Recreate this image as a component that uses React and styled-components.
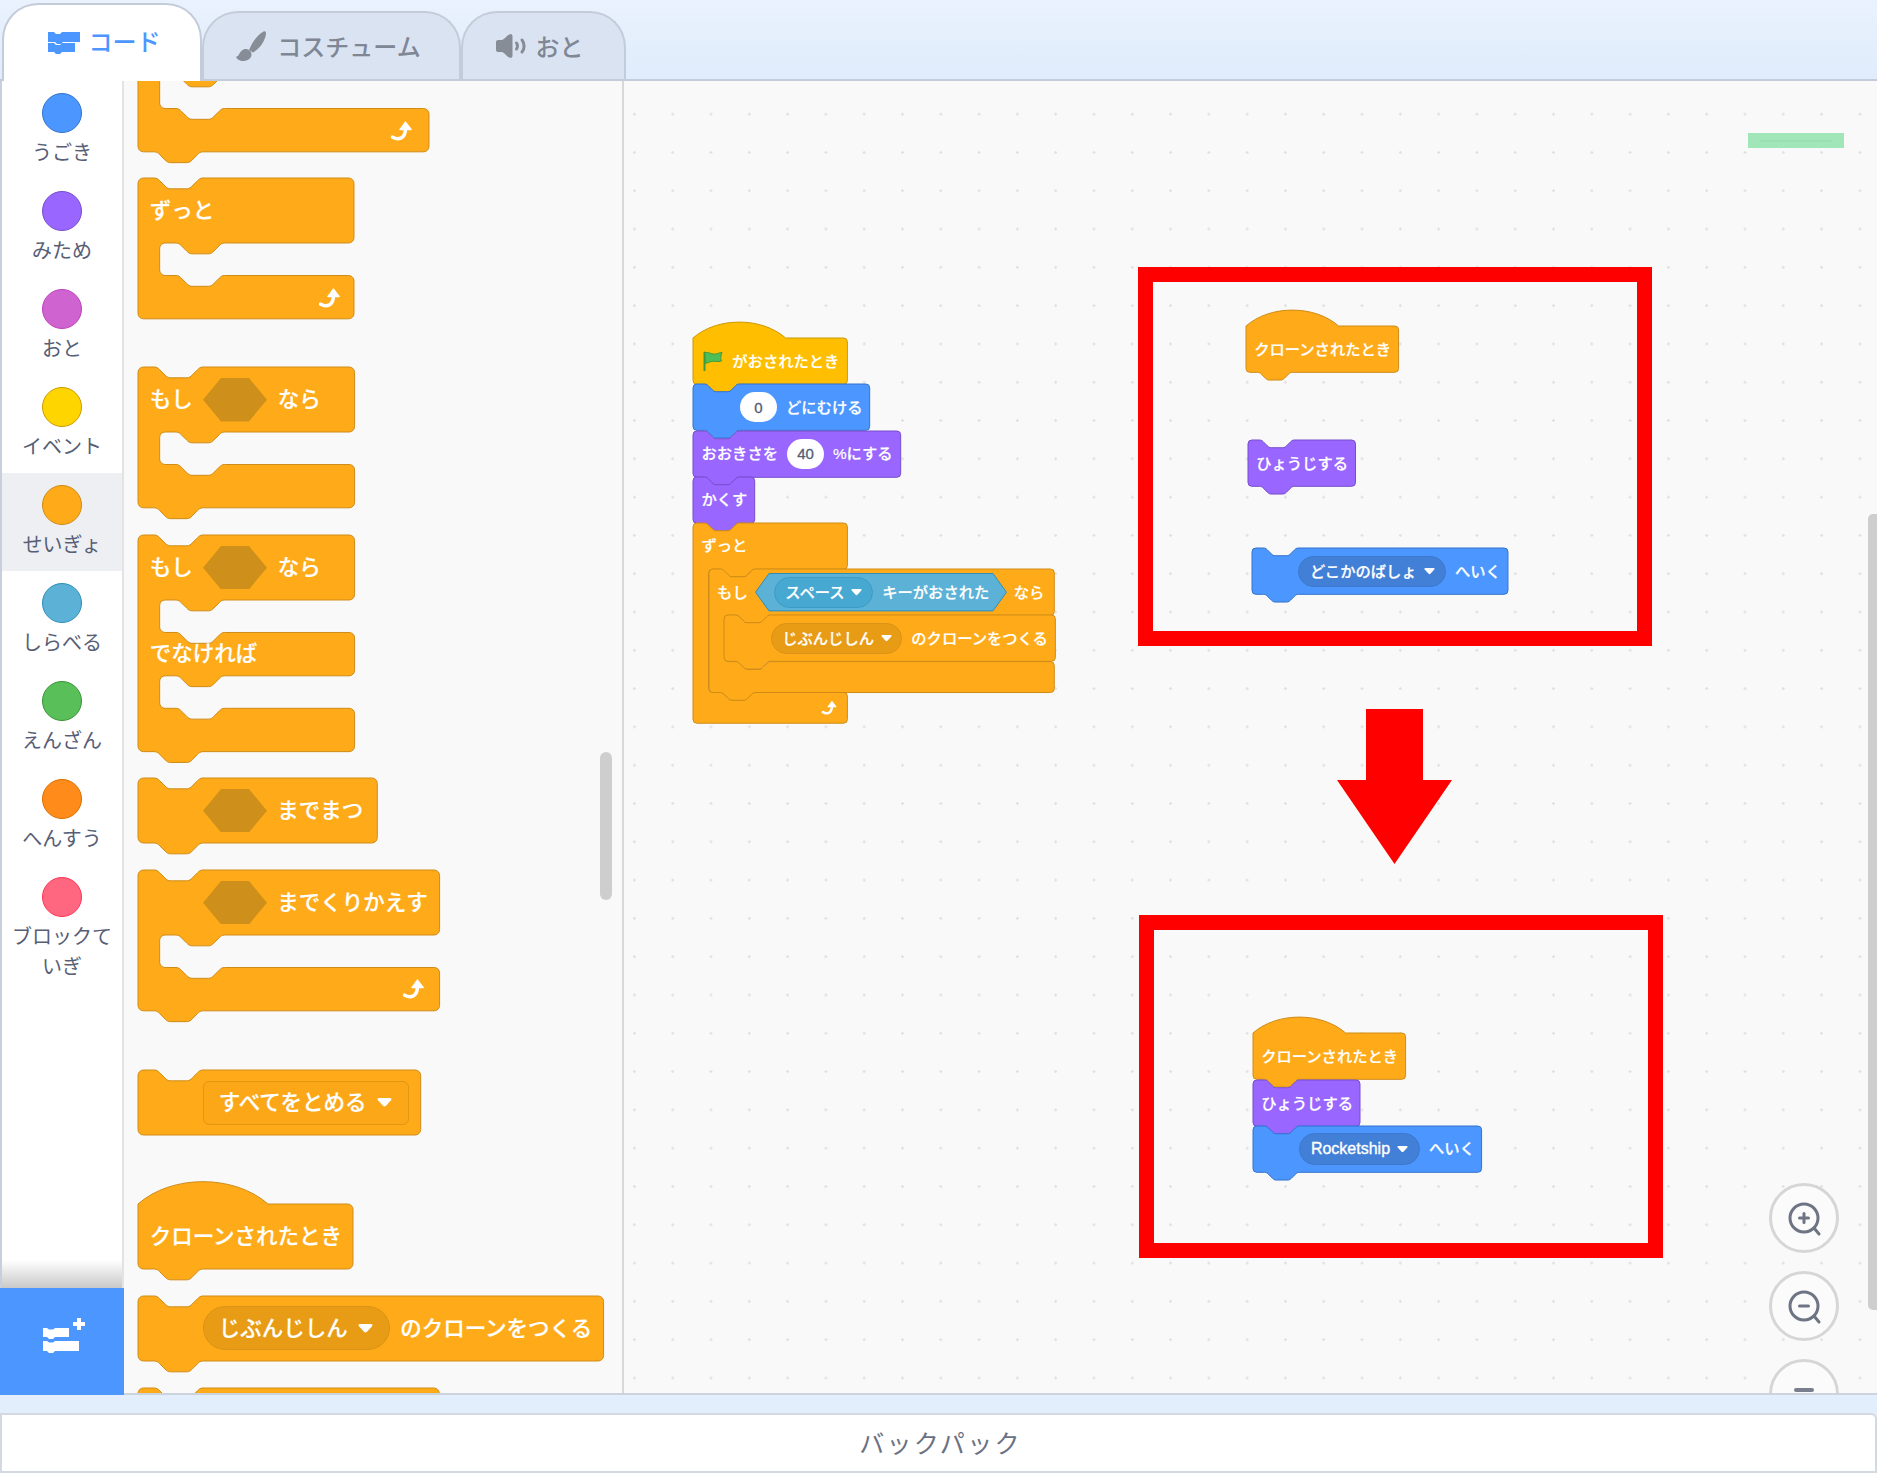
import React from 'react';
import styled, { createGlobalStyle } from 'styled-components';

const FONT = `"Liberation Sans", "Noto Sans CJK JP", sans-serif`;
const Global = createGlobalStyle`
  html, body { margin: 0; padding: 0; background: #e3eefc; }
  body { overflow: hidden; font-family: ${FONT}; }
  * { box-sizing: border-box; }
`;

const COLORS = {
  control: { fill: '#FFAB19', line: '#CF8B17' },
  event: { fill: '#FFBF00', line: '#CC9900' },
  motion: { fill: '#4C97FF', line: '#3373CC' },
  looks: { fill: '#9966FF', line: '#774DCB' },
};
const PAL = 1.354;
const WS = 0.965;

const NOTCH = 'c 2,0 3,1 4,2 l 4,4 c 1,1 2,2 4,2 h 12 c 2,0 3,-1 4,-2 l 4,-4 c 1,-1 2,-2 4,-2';
const NOTCH_R = 'c -2,0 -3,1 -4,2 l -4,4 c -1,1 -2,2 -4,2 h -12 c -2,0 -3,-1 -4,-2 l -4,-4 c -1,-1 -2,-2 -4,-2';

function blockPath({ w, hat, arms, gaps, cap }) {
  let d = hat
    ? `M0,0 c 25,-22 71,-22 96,0 H${w - 4} a4,4 0 0 1 4,4`
    : `M0,4 a4,4 0 0 1 4,-4 H12 ${NOTCH} H${w - 4} a4,4 0 0 1 4,4`;
  let y = 0;
  arms.forEach((arm, i) => {
    y += arm;
    d += ` V${y - 4} a4,4 0 0 1 -4,4`;
    if (i < arms.length - 1) {
      d += ` H64 ${NOTCH_R} H20 a4,4 0 0 0 -4,4`;
      y += gaps[i];
      d += ` V${y - 4} a4,4 0 0 0 4,4 H28 ${NOTCH} H${w - 4} a4,4 0 0 1 4,4`;
    }
  });
  d += cap ? ` H4` : ` H48 ${NOTCH_R} H4`;
  d += ` a4,4 0 0 1 -4,-4 Z`;
  return { d, total: y };
}

/* ---------- page frame ---------- */
const Page = styled.div`
  width: 1877px;
  height: 1473px;
  overflow: hidden;
  display: flex;
  flex-direction: column;
  background: #e3eefc;
  font-family: ${FONT};
`;
const TabBar = styled.div`
  height: 81px;
  flex: none;
  display: flex;
  align-items: flex-end;
  padding-left: 2px;
  border-bottom: 2px solid #c4ccd9;
  background: linear-gradient(#e9f2fd, #e0ecfc);
`;
const Tab = styled.div`
  width: ${(p) => p.$w}px;
  height: ${(p) => (p.$active ? 78 : 68)}px;
  margin-bottom: ${(p) => (p.$active ? -2 : 0)}px;
  position: relative;
  z-index: ${(p) => (p.$active ? 2 : 1)};
  display: flex;
  align-items: center;
  justify-content: center;
  gap: ${(p) => p.$gap}px;
  padding: 0 ${(p) => p.$nudgeR || 0}px 0 ${(p) => p.$nudgeL || 0}px;
  background: ${(p) => (p.$active ? '#ffffff' : '#d9e3f2')};
  border: 2px solid #c4ccd9;
  border-bottom: ${(p) => (p.$active ? 'none' : '0')};
  border-radius: 36px 36px 0 0;
  color: ${(p) => (p.$active ? '#4C97FF' : '#7f8694')};
  font-size: 24px;
  font-weight: 500;
`;
const TabText = styled.span`
  padding-bottom: ${(p) => (p.$active ? 5 : 2)}px;
`;
const TabIcon = styled.svg`
  flex: none;
  display: block;
`;
const Editor = styled.div`
  height: 1314px;
  flex: none;
  display: flex;
  border-bottom: 2px solid #cdd3dd;
  background: #f9f9f9;
`;
const Categories = styled.div`
  width: 124px;
  flex: none;
  display: flex;
  flex-direction: column;
  position: relative;
  z-index: 2;
`;
const CatList = styled.div`
  flex: 1;
  position: relative;
  background: #fff;
  border-left: 2px solid #c8cedb;
  border-right: 2px solid #e3e3e3;
  &::after {
    content: '';
    position: absolute;
    left: 0;
    right: 0;
    bottom: 0;
    height: 28px;
    background: linear-gradient(rgba(190, 190, 190, 0), #c9c9c9);
  }
`;
const CatItem = styled.div`
  height: 98px;
  padding: 12px 6px 0;
  display: flex;
  flex-direction: column;
  align-items: center;
  background: ${(p) => (p.$on ? '#eeeff2' : 'transparent')};
  color: #575e75;
  font-size: 20px;
  line-height: 30px;
  text-align: center;
`;
const CatDot = styled.div`
  width: 40px;
  height: 40px;
  flex: none;
  border-radius: 50%;
  background: ${(p) => p.$fill};
  border: 1.5px solid ${(p) => p.$line};
  margin-bottom: 5px;
`;
const ExtButton = styled.div`
  height: 107px;
  flex: none;
  margin-bottom: -2px;
  background: #4c97ff;
  display: flex;
  align-items: center;
  justify-content: center;
  padding: 0 0 12px 3px;
`;
const Palette = styled.div`
  width: 500px;
  flex: none;
  position: relative;
  overflow: hidden;
  padding-left: 13.7px;
  background: #f9f9f9;
  border-right: 2px solid #d9d9d9;
`;
const PaletteSlot = styled.div`
  margin-top: ${(p) => p.$mt}px;
`;
const PaletteThumb = styled.div`
  position: absolute;
  left: 476px;
  top: 671px;
  width: 12px;
  height: 148px;
  border-radius: 6px;
  background: #cecece;
`;
const Workspace = styled.div`
  flex: 1;
  position: relative;
  overflow: hidden;
  background-color: #f9f9f9;
  background-image: radial-gradient(circle at center, rgba(0, 0, 0, 0.1) 1px, transparent 1.5px);
  background-size: 38.3px 38.3px;
  background-position: -8.75px 14px;
`;
const WorkThumb = styled.div`
  position: absolute;
  right: 0;
  top: 433px;
  width: 9px;
  height: 796px;
  border-radius: 5px 0 0 5px;
  background: #cecece;
`;
const Placed = styled.div`
  position: absolute;
  left: ${(p) => p.$x}px;
  top: ${(p) => p.$y}px;
`;
const RedBox = styled.div`
  position: absolute;
  left: ${(p) => p.$x}px;
  top: ${(p) => p.$y}px;
  width: ${(p) => p.$w}px;
  height: ${(p) => p.$h}px;
  border: 15px solid #ff0000;
`;
const RedArrow = styled.svg`
  position: absolute;
  left: ${(p) => p.$x}px;
  top: ${(p) => p.$y}px;
`;
const MiniBar = styled.div`
  position: absolute;
  left: 1124px;
  top: 52px;
  width: 96px;
  height: 15px;
  background: #a0e6b8;
  display: flex;
  align-items: center;
  padding: 0 12px;
  &::after {
    content: '';
    flex: 1;
    height: 2px;
    background: #97dfb0;
  }
`;
const ZoomStack = styled.div`
  position: absolute;
  left: 1145px;
  top: 1102px;
  display: flex;
  flex-direction: column;
  gap: 18px;
`;
const ZoomButton = styled.div`
  width: 70px;
  height: 70px;
  flex: none;
  border-radius: 50%;
  border: 3.5px solid #d6d6d6;
  background: #fbfbfb;
  display: flex;
  align-items: ${(p) => (p.$top ? 'flex-start' : 'center')};
  justify-content: center;
`;
const ResetBar = styled.div`
  width: 20px;
  height: 4px;
  margin-top: 26px;
  border-radius: 2px;
  background: #7a7f8e;
`;
const BlueGap = styled.div`
  height: 18px;
  flex: none;
`;
const Backpack = styled.div`
  height: 60px;
  flex: none;
  display: flex;
  align-items: center;
  justify-content: center;
  padding: 0 0 2px 4px;
  background: #fff;
  border: 2px solid #d3d8e1;
  border-radius: 0 6px 0 0;
  color: #6b7183;
  font-size: 25px;
  letter-spacing: 2.3px;
`;

/* ---------- blocks ---------- */
const BlockBox = styled.div`
  position: relative;
  width: ${(p) => p.$w}px;
  height: ${(p) => p.$h}px;
`;
const Shape = styled.svg`
  position: absolute;
  left: 0;
  top: 0;
  overflow: visible;
  path {
    fill: ${(p) => p.$fill};
    stroke: ${(p) => p.$line};
    stroke-width: 1px;
    vector-effect: non-scaling-stroke;
  }
`;
const Row = styled.div`
  position: relative;
  height: ${(p) => p.$h}px;
  display: flex;
  align-items: center;
  gap: ${(p) => p.$gap}px;
  padding-left: ${(p) => p.$pad}px;
  color: #fff;
  font-size: ${(p) => p.$size}px;
  font-weight: 500;
  white-space: nowrap;
  -webkit-text-stroke: 0.2px #fff;
`;
/* a run of block text: the padding lifts the glyphs onto the block's centre line */
const T = styled.span`
  padding-bottom: 0.2em;
`;
const ArmLabel = styled.div`
  position: absolute;
  left: ${(p) => p.$pad}px;
  top: ${(p) => p.$top}px;
  height: ${(p) => p.$h}px;
  display: flex;
  align-items: center;
  color: #fff;
  font-size: ${(p) => p.$size}px;
  font-weight: 500;
  -webkit-text-stroke: 0.2px #fff;
`;
const Pill = styled.div`
  width: ${(p) => p.$w}px;
  height: ${(p) => p.$h}px;
  flex: none;
  display: flex;
  align-items: center;
  gap: ${(p) => p.$gap}px;
  padding-left: ${(p) => p.$pad}px;
  background: ${(p) => p.$fill};
  border: 1px solid ${(p) => p.$line};
  border-radius: ${(p) => (p.$square ? 6 : p.$h / 2)}px;
`;
const NumInput = styled.div`
  width: 37px;
  height: 30px;
  flex: none;
  display: flex;
  align-items: center;
  justify-content: center;
  background: #fff;
  border-radius: 15px;
  color: #575e75;
  font-size: 15px;
  font-weight: 400;
  -webkit-text-stroke: 0.35px #575e75;
`;
const Latin = styled.span`
  font-size: 16px;
  font-weight: 400;
  -webkit-text-stroke: 0.35px #fff;
`;
const HexIcon = styled.svg`
  flex: none;
  display: block;
  polygon {
    fill: #cf8f1b;
  }
`;
const BoolSlot = styled.div`
  position: relative;
  width: 252px;
  height: 38.4px;
  flex: none;
  display: flex;
  align-items: center;
  gap: 9px;
  padding-left: 19px;
`;
const BoolShape = styled.svg`
  position: absolute;
  left: 0;
  top: 0;
  polygon {
    fill: #5cb1d6;
    stroke: #2e8eb8;
    stroke-width: 1px;
  }
`;
const BoolPill = styled(Pill)`
  position: relative;
`;
const BoolText = styled(T)`
  position: relative;
`;
const CaretIcon = styled.svg`
  flex: none;
  display: block;
`;
const ArrowIcon = styled.svg`
  position: absolute;
  right: ${(p) => p.$r}px;
  bottom: ${(p) => p.$b}px;
`;
const FlagIcon = styled.svg`
  flex: none;
  display: block;
`;

function Caret({ w }) {
  return (
    <CaretIcon width={w} height={w * 0.58} viewBox="0 0 16 9.3">
      <path d="M2.5 0 H13.5 Q16.5 0 15 2.3 L9.6 8.2 Q8 9.8 6.4 8.2 L1 2.3 Q-0.5 0 2.5 0 Z" fill="#fff" />
    </CaretIcon>
  );
}

function LoopArrow({ w, r, b }) {
  return (
    <ArrowIcon $r={r} $b={b} width={w} height={w * 0.9} viewBox="0 0 24 22">
      <path d="M2.5 17.5 C8 20.5 15 19.5 15.5 9.5" fill="none" stroke="#fff" strokeWidth="3.6" strokeLinecap="round" />
      <path d="M15.5 1 L22 9.5 Q22.5 10.5 21 10.5 H10 Q8.6 10.5 9.3 9.4 Z" fill="#fff" />
    </ArrowIcon>
  );
}

function Block({ kind = 'control', s, wpx, hat, cap, arms = [48], gaps = [], pad = 0, gap = 0, size, row, labels, extra }) {
  const w = wpx / s;
  const { d, total } = blockPath({ w, hat, arms, gaps, cap });
  const c = COLORS[kind];
  return (
    <BlockBox $w={wpx} $h={total * s}>
      <Shape $fill={c.fill} $line={c.line} width={wpx} height={total * s} viewBox={`0 0 ${w} ${total}`}>
        <path d={d} />
      </Shape>
      <Row $h={arms[0] * s} $pad={pad} $gap={gap} $size={size}>{row}</Row>
      {labels}
      {extra}
    </BlockBox>
  );
}

/* palette helper props */
const P = { s: PAL, size: 21.5, pad: 12, gap: 10.5 };
/* workspace helper props */
const W = { s: WS, size: 15.3, pad: 8.2, gap: 9 };

function Hex() {
  return (
    <HexIcon width="64" height="43.4" viewBox="0 0 64 43.4">
      <polygon points="0,21.7 18,0 46,0 64,21.7 46,43.4 18,43.4" />
    </HexIcon>
  );
}

const at = (x, y) => ({ $x: x - 624, $y: y - 81 });

const CATS = [
  ['うごき', '#4C97FF', '#3373CC'],
  ['みため', '#9966FF', '#774DCB'],
  ['おと', '#CF63CF', '#BD42BD'],
  ['イベント', '#FFD500', '#CC9900'],
  ['せいぎょ', '#FFAB19', '#CF8B17'],
  ['しらべる', '#5CB1D6', '#2E8EB8'],
  ['えんざん', '#59C059', '#389438'],
  ['へんすう', '#FF8C1A', '#DB6E00'],
  ['ブロックていぎ', '#FF6680', '#FF3355'],
];

function MagnifyIcon({ plus }) {
  return (
    <svg width="40" height="40" viewBox="0 0 40 40" fill="none" stroke="#6f7484" strokeLinecap="round">
      <circle cx="20" cy="20" r="14" strokeWidth="3" />
      <path d="M30 30 L35 36" strokeWidth="3" />
      <path d="M15.5 20 H24.5" strokeWidth="3" />
      {plus && <path d="M20 15.5 V24.5" strokeWidth="3" />}
    </svg>
  );
}

export default function App() {
  return (
    <Page>
      <Global />
      <TabBar>
        <Tab $active $w={200} $gap={9} $nudgeL={4}>
          <TabIcon width="32" height="22" viewBox="0 0 32 22" fill="#4C97FF">
            <path d="M0 0 H6 L8 2 H12 L14 0 H32 V10 H15 L13 12 H9 L7 10 H0 Z" />
            <path d="M0 11 H6 L8 13 H12 L14 11 H27 V20 H14 L12 22 H8 L6 20 H0 Z" />
          </TabIcon>
          <TabText $active>コード</TabText>
        </Tab>
        <Tab $w={259} $gap={11} $nudgeR={6}>
          <TabIcon width="30" height="30" viewBox="0 0 30 30" fill="#878d96">
            <path d="M27.5 0.5 C30.5 -0.5 30.5 3 29 7 C27 13 23 18 17 21.5 L13 19 C16 12 21 4 27.5 0.5 Z" />
            <path d="M7.5 18.5 C11.5 17 15.5 20 15.5 23.5 C15.5 27.5 11.5 30 7 30 C3 30 0 27.5 0.2 25.5 C3 26 3.5 20 7.5 18.5 Z" />
          </TabIcon>
          <TabText>コスチューム</TabText>
        </Tab>
        <Tab $w={165} $gap={8} $nudgeR={8}>
          <TabIcon width="32" height="24" viewBox="0 0 32 24" fill="none">
            <path d="M2 6 H6 C9 5 11 1 14 0.2 C15.5 -0.2 16.5 1 16.5 2.5 V21.5 C16.5 23 15.5 24.2 14 23.8 C11 23 9 19 6 18 H2 C0.8 18 0 17 0 16 V8 C0 7 0.8 6 2 6 Z" fill="#878d96" />
            <path d="M20.5 9 C21.8 10.5 21.8 13.5 20.5 15" stroke="#878d96" strokeWidth="3" strokeLinecap="round" />
            <path d="M26 6 C28.8 9.5 28.8 14.5 26 18" stroke="#878d96" strokeWidth="3" strokeLinecap="round" />
          </TabIcon>
          <TabText>おと</TabText>
        </Tab>
      </TabBar>

      <Editor>
        <Categories>
          <CatList>
            {CATS.map(([name, fill, line], i) => (
              <CatItem key={name} $on={i === 4}>
                <CatDot $fill={fill} $line={line} />
                {name}
              </CatItem>
            ))}
          </CatList>
          <ExtButton>
            <svg width="42" height="35" viewBox="0 0 42 35" fill="#fff">
              <path d="M0 10 H4 L6 11.5 H10 L12 10 H26 V19 H12 L10 21 H6 L4 19 H0 Z" />
              <path d="M0 23 H4 L6 24.5 H10 L12 23 H36 V33 H12 L10 35 H6 L4 33 H0 Z" />
              <path d="M34 0 H38 V4 H42 V8 H38 V12 H34 V8 H30 V4 H34 Z" />
            </svg>
          </ExtButton>
        </Categories>

        <Palette>
          <PaletteSlot $mt={-69.7}>
            <Block {...P} wpx={291} arms={[48, 32]} gaps={[24]} extra={<LoopArrow w={24} r={15} b={11} />} />
          </PaletteSlot>
          <PaletteSlot $mt={26.2}>
            <Block {...P} wpx={216} arms={[48, 32]} gaps={[24]} cap row={<T>ずっと</T>} extra={<LoopArrow w={24} r={12} b={11} />} />
          </PaletteSlot>
          <PaletteSlot $mt={48.2}>
            <Block {...P} wpx={216.6} arms={[48, 32]} gaps={[24]} row={<><T>もし</T><Hex /><T>なら</T></>} />
          </PaletteSlot>
          <PaletteSlot $mt={26.6}>
            <Block
              {...P}
              wpx={216.6}
              arms={[48, 32, 32]}
              gaps={[24, 24]}
              row={<><T>もし</T><Hex /><T>なら</T></>}
              labels={<ArmLabel $pad={12} $top={97.5} $h={43.3} $size={21.5}><T>でなければ</T></ArmLabel>}
            />
          </PaletteSlot>
          <PaletteSlot $mt={26.7}>
            <Block {...P} wpx={239.3} pad={65} row={<><Hex /><T>までまつ</T></>} />
          </PaletteSlot>
          <PaletteSlot $mt={27}>
            <Block {...P} wpx={301.6} pad={65} arms={[48, 32]} gaps={[24]} row={<><Hex /><T>までくりかえす</T></>} extra={<LoopArrow w={24} r={13} b={11} />} />
          </PaletteSlot>
          <PaletteSlot $mt={59.2}>
            <Block
              {...P}
              wpx={282.7}
              pad={65}
              cap
              row={
                <Pill $w={206} $h={44} $pad={15} $gap={11} $fill="#fba718" $line="#DF9714" $square>
                  <T>すべてをとめる</T>
                  <Caret w={15} />
                </Pill>
              }
            />
          </PaletteSlot>
          <PaletteSlot $mt={69.3}>
            <Block {...P} hat wpx={215} row={<T>クローンされたとき</T>} />
          </PaletteSlot>
          <PaletteSlot $mt={26.7}>
            <Block
              {...P}
              wpx={465.6}
              pad={65}
              row={
                <>
                  <Pill $w={187} $h={44} $pad={15} $gap={10} $fill="#E89B14" $line="#DB9316">
                    <T>じぶんじしん</T>
                    <Caret w={15} />
                  </Pill>
                  <T>のクローンをつくる</T>
                </>
              }
            />
          </PaletteSlot>
          <PaletteSlot $mt={27}>
            <Block {...P} wpx={301.3} />
          </PaletteSlot>
          <PaletteThumb />
        </Palette>

        <Workspace>
          <MiniBar />

          {/* green-flag script */}
          <Placed {...at(693.3, 338.3)}>
            <Block
              {...W}
              kind="event"
              hat
              wpx={154.4}
              pad={10}
              row={
                <>
                  <FlagIcon width="20" height="20" viewBox="0 0 20 20">
                    <path d="M1.5 2 C5 0 9 4 13 3 C15.5 2.5 17.5 1 19 1.5 C18 4.5 17 7 18.5 10 C15 11.5 11 9.5 8 10.5 C6 11 4 12 2.5 12.5 Z" fill="#4CBF56" stroke="#45993D" strokeWidth="1" />
                    <path d="M1.5 1.5 V19.5" stroke="#45993D" strokeWidth="2" strokeLinecap="round" />
                  </FlagIcon>
                  <T>がおされたとき</T>
                </>
              }
            />
          </Placed>
          <Placed {...at(693.3, 384.3)}>
            <Block {...W} kind="motion" wpx={176.7} pad={46.7} gap={9} row={<><NumInput>0</NumInput><T>どにむける</T></>} />
          </Placed>
          <Placed {...at(693.3, 430.7)}>
            <Block {...W} kind="looks" wpx={207.7} gap={9} row={<><T>おおきさを</T><NumInput>40</NumInput><T>%にする</T></>} />
          </Placed>
          <Placed {...at(693.3, 476.7)}>
            <Block {...W} kind="looks" wpx={61.7} row={<T>かくす</T>} />
          </Placed>
          <Placed {...at(693.3, 522.7)}>
            <Block {...W} wpx={154.4} cap arms={[48, 32]} gaps={[127.5]} row={<T>ずっと</T>} extra={<LoopArrow w={17} r={9.5} b={8} />} />
          </Placed>
          <Placed {...at(708.7, 569.3)}>
            <Block
              {...W}
              wpx={345.3}
              arms={[48, 32]}
              gaps={[48]}
              pad={8.4}
              gap={7}
              row={
                <>
                  <T>もし</T>
                  <BoolSlot>
                    <BoolShape width="252" height="38.4" viewBox="0 0 252 38.4">
                      <polygon points="0.5,19.2 14,0.5 238,0.5 251.5,19.2 238,37.9 14,37.9" />
                    </BoolShape>
                    <BoolPill $w={99.5} $h={31.4} $pad={10.5} $gap={6} $fill="#47A8D1" $line="#3D9CC4">
                      <T>スペース</T>
                      <Caret w={11} />
                    </BoolPill>
                    <BoolText>キーがおされた</BoolText>
                  </BoolSlot>
                  <T>なら</T>
                </>
              }
            />
          </Placed>
          <Placed {...at(724.3, 615.3)}>
            <Block
              {...W}
              wpx={331.4}
              pad={46.4}
              row={
                <>
                  <Pill $w={131.6} $h={30.7} $pad={10.5} $gap={7} $fill="#E89B14" $line="#DB9316">
                    <T>じぶんじしん</T>
                    <Caret w={11} />
                  </Pill>
                  <T>のクローンをつくる</T>
                </>
              }
            />
          </Placed>

          {/* top red box */}
          <RedBox {...at(1138, 267)} $w={514} $h={379} />
          <Placed {...at(1246, 326)}>
            <Block {...W} hat wpx={152.6} row={<T>クローンされたとき</T>} />
          </Placed>
          <Placed {...at(1248, 440)}>
            <Block {...W} kind="looks" wpx={107.5} row={<T>ひょうじする</T>} />
          </Placed>
          <Placed {...at(1252, 548.3)}>
            <Block
              {...W}
              kind="motion"
              wpx={256}
              pad={46}
              row={
                <>
                  <Pill $w={148} $h={30.7} $pad={11} $gap={7} $fill="#4280D7" $line="#3D78CD">
                    <T>どこかのばしょ</T>
                    <Caret w={11} />
                  </Pill>
                  <T>へいく</T>
                </>
              }
            />
          </Placed>

          <RedArrow {...at(1337, 709)} width="115" height="155" viewBox="0 0 115 155">
            <polygon points="29,0 86,0 86,71 115,71 57.5,155 0,71 29,71" fill="#ff0000" />
          </RedArrow>

          {/* bottom red box */}
          <RedBox {...at(1139, 915)} $w={524} $h={343} />
          <Placed {...at(1253, 1033)}>
            <Block {...W} hat wpx={152.6} row={<T>クローンされたとき</T>} />
          </Placed>
          <Placed {...at(1253, 1080)}>
            <Block {...W} kind="looks" wpx={107} row={<T>ひょうじする</T>} />
          </Placed>
          <Placed {...at(1253, 1125.7)}>
            <Block
              {...W}
              kind="motion"
              wpx={228.6}
              pad={46.4}
              row={
                <>
                  <Pill $w={120.6} $h={31.5} $pad={10.5} $gap={7} $fill="#4280D7" $line="#3D78CD">
                    <Latin>Rocketship</Latin>
                    <Caret w={11} />
                  </Pill>
                  <T>へいく</T>
                </>
              }
            />
          </Placed>

          <ZoomStack>
            <ZoomButton><MagnifyIcon plus /></ZoomButton>
            <ZoomButton><MagnifyIcon /></ZoomButton>
            <ZoomButton $top><ResetBar /></ZoomButton>
          </ZoomStack>
          <WorkThumb />
        </Workspace>
      </Editor>

      <BlueGap />
      <Backpack>バックパック</Backpack>
    </Page>
  );
}
